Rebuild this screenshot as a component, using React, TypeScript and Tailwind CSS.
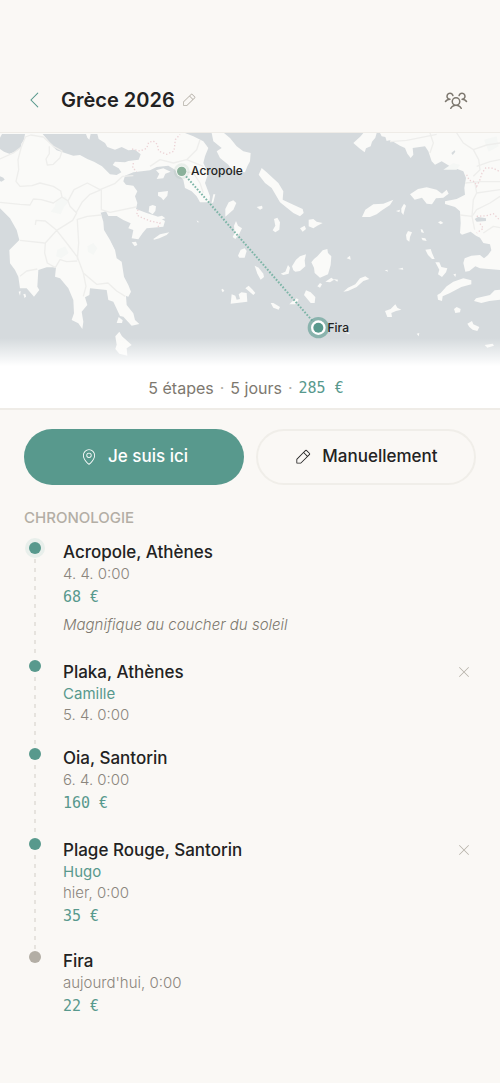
import { clsx } from "clsx";
import { PiCaretLeftLight, PiMapPinLight, PiPencilSimpleLight, PiUsersThree, PiXLight } from "react-icons/pi";

interface Stop {
  id: number;
  place: string;
  author?: string;
  date: string;
  price?: string;
  note?: string;
}

const STOPS: Stop[] = [
  { id: 1, place: "Acropole, Athènes", date: "4. 4. 0:00", price: "68 €", note: "Magnifique au coucher du soleil" },
  { id: 2, place: "Plaka, Athènes", author: "Camille", date: "5. 4. 0:00" },
  { id: 3, place: "Oia, Santorin", date: "6. 4. 0:00", price: "160 €" },
  { id: 4, place: "Plage Rouge, Santorin", author: "Hugo", date: "hier, 0:00", price: "35 €" },
  { id: 5, place: "Fira", date: "aujourd'hui, 0:00", price: "22 €" },
];

const MAINLAND =
  "M0 0H555L580 10 610 25 625 45 615 70 610 90 625 120 615 150 630 190 628 208 600 208 590 190 575 175 555 165 550 140 535 125 525 110 505 98 470 102 450 112 400 118 375 128 370 145 378 155 400 158 412 175 405 190 412 210 408 228 440 240 470 250 495 264 490 281 440 286 428 300 415 319 395 316 400 291 385 286 392 271 370 261 350 249 325 249 318 235 302 239 310 266 312 291 330 321 345 351 350 376 365 386 372 431 385 456 393 476 385 491 378 489 380 516 400 541 405 561 418 573 395 578 370 551 360 549 340 506 325 501 320 471 270 466 268 486 255 493 262 516 245 536 250 566 247 588 235 571 215 561 222 541 220 501 205 466 180 436 165 431 168 403 140 403 115 411 112 461 118 471 102 491 80 466 60 466 55 431 45 411 30 391 28 351 58 321 50 291 30 256 0 226Z";

const GULFS = [
  "M6 3H75L72 20 64 32 62 45 45 56 28 62 12 56 0 48V14Z",
  "M128 3H258L262 14 268 20 272 3H292L296 18 315 30 322 42 345 50 365 42 385 52 405 50 422 64 416 80 385 84 375 88 345 86 338 96 356 106 364 118 350 126 330 124 318 112 306 100 282 86 262 78 240 66 220 68 195 60 170 52 160 42 146 24Z",
];

const ISLANDS = [
  "M635 0H672L690 15 710 40 730 55 752 60 750 85 742 100 735 118 695 110 685 95 660 75 650 55 665 45 640 25Z",
  "M785 105L800 118 835 150 850 175 848 200 880 215 908 228 911 240 900 250 880 240 840 208 815 165 795 150 776 125Z",
  "M468 112L490 106 512 116 496 122 490 136 470 138 478 122Z",
  "M474 178L504 174 502 188 490 202 484 194 474 188Z",
  "M448 220L458 216 468 220 466 234 458 244 446 236Z",
  "M470 252L486 248 496 256 476 262Z",
  "M460 318L480 304 508 298 500 306 478 316 462 320Z",
  "M395 328L408 326 412 336 404 340Z",
  "M640 184H646L640 208 634 212Z",
  "M686 208L700 202 709 210 700 230 676 251 676 228Z",
  "M702 278L708 264 714 278 726 286 718 302 706 318 698 312 704 300Z",
  "M714 368L722 350 734 346 740 354 734 374 718 374Z",
  "M692 512L695 484 706 488 710 500 720 498 716 484 724 478 740 480 742 506Z",
  "M736 466L746 458 758 470 766 480 760 486 746 474Z",
  "M664 470L668 467 673 473 668 478Z",
  "M764 398L776 404 790 422 792 432 782 440 772 422Z",
  "M812 510L820 510 840 522 836 530 820 524Z",
  "M366 610L358 596 346 610 350 635 346 648 358 662 382 668 380 646 395 636Z",
  "M350 570L356 552 368 562 366 570Z",
  "M56 476L62 474 60 488Z",
  "M70 484L76 482 78 490 74 496Z",
  "M770 222L786 218 788 226 780 230Z",
  "M822 258L832 254 840 268 838 290 826 298 818 292 826 278Z",
  "M900 286L914 278 918 288 908 296Z",
  "M926 260L940 258 950 266 968 270 952 278 940 286 926 280Z",
  "M876 400L888 380 900 370 918 364 914 382 916 400 900 414 886 416 880 412Z",
  "M842 422L856 416 864 396 870 404 866 422 850 426Z",
  "M934 388L942 378 952 370 968 352 982 348 984 360 994 370 992 396 984 424 960 434 944 420 942 404Z",
  "M912 486L918 472 932 478 946 492 944 510 932 510Z",
  "M868 514L878 504 890 496 896 500 886 514Z",
  "M952 460L960 450 966 454 960 464Z",
  "M976 446L994 434 1002 440 990 448Z",
  "M1000 438L1014 440 1012 446Z",
  "M1040 376L1050 368 1052 380Z",
  "M1030 476L1044 464 1066 454 1080 436 1096 430 1108 438 1090 444 1070 462 1044 474Z",
  "M1154 412L1162 410 1164 416Z",
  "M1194 408L1208 404 1210 410Z",
  "M1086 252L1096 230 1120 214 1150 212 1180 200 1170 216 1146 232 1130 244 1110 252Z",
  "M1230 184L1254 168 1280 163 1310 170 1326 182 1340 170 1346 182 1330 194 1308 196 1296 214 1280 212 1266 194 1244 200Z",
  "M1188 234L1200 230 1198 238Z",
  "M1204 226L1212 212 1218 218 1214 230 1210 246 1204 238Z",
  "M1314 268L1322 264 1330 270 1322 274Z",
  "M1218 306L1224 294 1236 298 1230 312 1228 326 1220 320Z",
  "M1262 288L1268 290 1272 300 1264 298Z",
  "M1264 314L1276 316 1280 324 1268 322Z",
  "M1276 350L1292 348 1296 360 1304 378 1296 378 1284 366Z",
  "M1306 388L1318 388 1324 402 1342 406 1338 418 1326 432 1314 424 1318 410Z",
  "M1360 424L1368 422 1366 432Z",
  "M1312 486L1322 480 1340 460 1360 446 1390 436 1414 442 1414 454 1384 462 1350 480 1328 490 1326 504 1314 500Z",
  "M1362 528L1370 522 1382 528 1380 538 1366 540Z",
  "M1155 534L1172 528 1186 514 1192 524 1204 530 1188 534 1174 540 1176 552 1162 552Z",
  "M1402 572L1416 564 1420 574 1438 582 1432 594 1418 590 1408 582Z",
  "M1250 602L1258 600 1256 610Z",
  "M1454 636L1478 632 1482 638 1462 644Z",
  "M1034 598L1050 600 1046 604Z",
  "M590 262L598 268 592 268Z",
  "M1060 30L1082 10 1090 0 1130 0 1126 14 1116 26 1112 40 1098 46 1094 58 1078 46Z",
];

const ANATOLIA =
  "M1140 0H1500V411L1440 406 1426 400 1408 414 1396 416 1390 390 1394 376 1414 368 1440 366 1452 376 1464 366 1474 352 1470 334 1450 330 1440 314 1428 308 1412 296 1386 305 1380 300 1382 270 1380 235 1365 222 1335 213V205L1370 198 1395 185 1393 165 1398 135 1390 115 1350 100 1325 85 1305 95 1295 85 1285 55 1275 40 1238 45 1240 65 1232 75 1222 62 1215 45 1200 38 1180 26 1168 22 1160 24 1156 12 1145 10Z";

const DATCA = "M1500 470L1484 472 1470 486 1428 496 1422 504 1444 510 1468 504 1500 500Z";

const ROADS = [
  "M0 78L40 60 64 42 76 12 92 6 130 12 160 40 186 54 180 74 160 94 142 96 138 78 148 62 148 40",
  "M64 42L54 80 56 110 48 145 60 160 96 158 120 150 160 160 182 174 186 192 204 204 210 220 230 240 218 262 170 292 136 264 108 262 106 276",
  "M0 208L60 214 90 216 100 198 124 200 160 210 186 192",
  "M204 204L222 170 262 150 300 170 344 152 368 130 400 128",
  "M304 170L304 230 330 238 408 222 M230 260L262 250 304 246",
  "M228 240L246 208 270 184 304 170",
  "M170 292L136 330 134 360 142 390 166 404 M60 322L134 330 M170 292L200 330 232 372 250 420 290 454 324 450 350 474 376 490",
  "M232 260L236 330 232 380 M60 430L80 414 112 408 M166 404L180 380 200 386 232 384 M250 420L258 460 250 490",
  "M450 100L480 80 520 90 560 80 590 50 600 20 M545 115L580 120 600 150 610 180 M560 80L610 100",
  "M1170 26L1220 22 1280 10 1310 4 M1370 0L1390 30 1420 50 1436 80 1440 110 1420 130 M1420 50L1460 36 1500 30",
  "M1395 150L1440 146 1500 146 M1424 146L1430 180 1420 200 1416 250 1380 246 M1430 180L1500 170 M1290 60L1300 30 1290 0 M1430 100L1470 86 1500 80",
  "M1416 250L1430 230 1470 210 1500 190 M1416 250L1424 290 M1450 300L1480 280 1500 284",
];

const BORDERS = [
  "M396 48L420 54 440 46 446 28 460 24 472 34 476 54 500 64 522 54 526 20 540 4",
  "M400 90L398 104 410 116",
  "M414 230L410 246 430 256 450 264 480 270 474 282",
  "M1400 125L1408 142 1424 146 1430 160 1440 140 1446 120 1458 104 1480 106 1500 116",
  "M1430 250L1460 248 1480 242 1500 262 M1440 272L1450 286 1430 300",
];

function TripMap() {
  return (
    <div className="relative overflow-hidden bg-[#d5dadd]">
      <svg viewBox="0 0 1500 699" className="block h-auto w-full" role="img" aria-label="Carte du voyage">
        <g fill="#fafaf8">
          <path d={MAINLAND} />
          <path d={ANATOLIA} />
          <path d={DATCA} />
          {ISLANDS.map((d) => (
            <path key={d} d={d} />
          ))}
        </g>
        <g fill="#d5dadd">
          {GULFS.map((d) => (
            <path key={d} d={d} />
          ))}
          <path d="M1424 258L1434 252 1458 256 1458 264 1430 266Z" />
          <path d="M1354 60L1364 52 1366 56 1358 66Z" />
          <path d="M0 130L10 134 14 140 4 146 0 144Z" />
        </g>
        <g fill="#f5f7f5">
          <path d="M170 200L196 190 206 206 192 222 182 244 152 236 164 220Z" />
          <path d="M172 350L196 340 206 360 184 376 168 370Z" />
          <path d="M262 340L280 330 292 346 280 366 264 356Z" />
          <path d="M1330 110L1360 90 1380 96 1370 110Z" />
          <path d="M1452 20L1490 10 1496 40 1466 56Z" />
        </g>
        <g fill="none" stroke="#eeeeec" strokeWidth="4" strokeLinejoin="round">
          {ROADS.map((d) => (
            <path key={d} d={d} />
          ))}
        </g>
        <g fill="none" stroke="#ecd3d6" strokeWidth="4" strokeDasharray="4 6">
          {BORDERS.map((d) => (
            <path key={d} d={d} />
          ))}
        </g>
        <path d="M545 115L955 584" stroke="#7db5a7" strokeWidth="6" strokeDasharray="5 5" />
        <circle cx="545" cy="115" r="24" fill="#8ab19a" opacity="0.15" />
        <circle cx="545" cy="115" r="17" fill="#f4f7f4" />
        <circle cx="545" cy="115" r="14" fill="#8ab19a" />
        <circle cx="955" cy="584" r="32" fill="#58998d" opacity="0.6" />
        <circle cx="955" cy="584" r="22" fill="#fff" />
        <circle cx="955" cy="584" r="15" fill="#58998d" />
      </svg>
      <span className="absolute top-[16.5%] left-[38.2%] -translate-y-1/2 text-xs font-medium text-[#222]">Acropole</span>
      <span className="absolute top-[83.5%] left-[65.5%] -translate-y-1/2 text-xs font-medium text-[#222]">Fira</span>
      <div className="absolute inset-x-0 bottom-0 h-7 bg-linear-to-b from-white/0 to-white" />
    </div>
  );
}

function TimelineItem({ stop, first, last }: { stop: Stop; first: boolean; last: boolean }) {
  return (
    <li className="flex gap-[17px]">
      <div className="flex w-[22px] shrink-0 flex-col items-center pt-0.5">
        <span
          className={clsx(
            "size-3 shrink-0 rounded-full",
            last ? "bg-[#b3aea5]" : "bg-[#58998d]",
            first && "ring-4 ring-[#e8efeb]"
          )}
        />
        {!last && (
          <span className="w-0.5 flex-1 bg-[repeating-linear-gradient(to_bottom,transparent_0_5px,#e6e3de_5px_9px)]" />
        )}
      </div>

      <div className={clsx("min-w-0 flex-1 pt-px", !last && "pb-[22px]")}>
        <div className={clsx("flex items-center justify-between", stop.author ? "h-[25px]" : "h-[22px]")}>
          <h3 className="truncate text-[17px] leading-[22px] font-medium text-[#222]">{stop.place}</h3>
          {stop.author && (
            <button type="button" aria-label={`Supprimer ${stop.place}`} className="flex size-6 items-center justify-center">
              <PiXLight className="size-4 text-[#b3aea5]" />
            </button>
          )}
        </div>
        {stop.author && <p className="text-[15px] leading-5 text-[#58998d]">{stop.author}</p>}
        <p className="mt-0.5 text-[15px] leading-[18px] font-light text-[#8b867d]">{stop.date}</p>
        {stop.price && (
          <p className="mt-[3px] font-['DejaVu_Sans_Mono',monospace] text-[15px] leading-[22px] text-[#58998d]">
            {stop.price}
          </p>
        )}
        {stop.note && <p className="mt-1.5 text-[15px] leading-[22px] font-light text-[#7d786f] italic">{stop.note}</p>}
      </div>
    </li>
  );
}

export default function App() {
  return (
    <div className="min-h-screen bg-[#faf8f5] font-['Inter',sans-serif] text-[#222]">
      <header className="flex items-center border-b border-[#efece7] px-6 pt-[88px] pb-5">
        <button type="button" aria-label="Retour" className="flex w-[22px] justify-center">
          <PiCaretLeftLight className="size-6 text-[#58998d]" />
        </button>
        <h1 className="ml-[15px] text-xl leading-6 font-semibold">Grèce 2026</h1>
        <button type="button" aria-label="Modifier le titre" className="ml-1.5">
          <PiPencilSimpleLight className="size-4 text-[#b3aea5]" />
        </button>
        <button type="button" aria-label="Participants" className="ml-auto pr-2">
          <PiUsersThree className="size-6 text-[#7d786f]" />
        </button>
      </header>

      <TripMap />

      <div className="flex items-center justify-center gap-1.5 border-b-2 border-[#efece7] bg-white pt-3 pr-2 pb-2.5 text-base leading-5 text-[#7d786f]">
        <span>5 étapes</span>
        <span className="text-[#b3aea5]">·</span>
        <span>5 jours</span>
        <span className="text-[#b3aea5]">·</span>
        <span className="font-['DejaVu_Sans_Mono',monospace] text-[15px] text-[#58998d]">285 €</span>
      </div>

      <main className="px-6">
        <div className="grid grid-cols-2 gap-3 pt-[19px]">
          <button
            type="button"
            className="flex h-14 items-center justify-center gap-2.5 rounded-full bg-[#58998d] text-[17px] font-medium text-white"
          >
            <PiMapPinLight className="size-[18px]" />
            Je suis ici
          </button>
          <button
            type="button"
            className="flex h-14 items-center justify-center gap-2.5 rounded-full border-2 border-[#f0eee9] text-[17px] font-medium"
          >
            <PiPencilSimpleLight className="size-[18px]" />
            Manuellement
          </button>
        </div>

        <h2 className="mt-[23px] text-[15px] leading-5 font-medium text-[#b3aea5] uppercase">Chronologie</h2>

        <ol className="mt-3">
          {STOPS.map((stop, i) => (
            <TimelineItem key={stop.id} stop={stop} first={i === 0} last={i === STOPS.length - 1} />
          ))}
        </ol>
      </main>
    </div>
  );
}
